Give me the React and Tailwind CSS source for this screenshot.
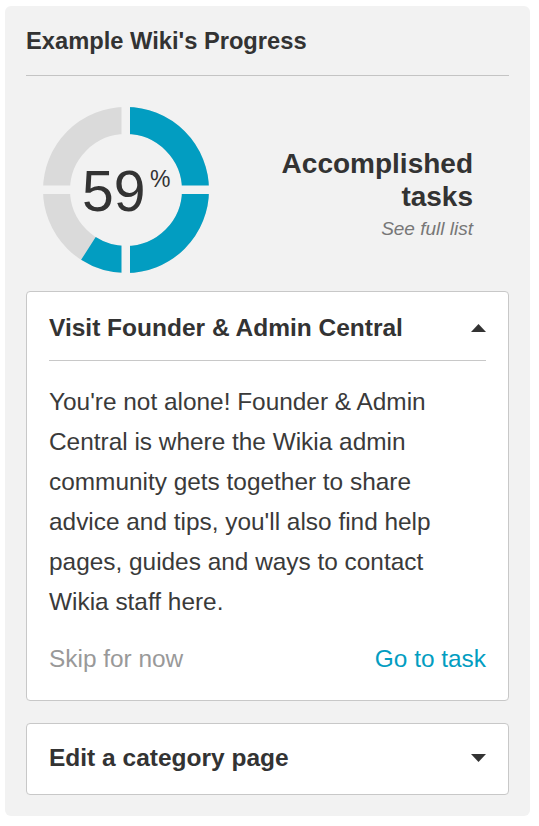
import React from 'react';

const BLUE = '#029dc1';

function Donut({ percent }) {
  const r = 69.5;
  const c = 2 * Math.PI * r;
  return (
    <div className="relative w-[166px] h-[166px] shrink-0">
      <svg width="166" height="166" viewBox="0 0 166 166">
        <circle cx="83" cy="83" r={r} fill="none" stroke="#dadada" strokeWidth="27" />
        <circle
          cx="83"
          cy="83"
          r={r}
          fill="none"
          stroke={BLUE}
          strokeWidth="27"
          strokeDasharray={`${(c * percent) / 100} ${c}`}
          transform="rotate(-90 83 83)"
        />
        <rect x="78.5" y="0" width="8.5" height="166" fill="#f2f2f2" />
        <rect x="0" y="78.5" width="166" height="8.5" fill="#f2f2f2" />
      </svg>
      <span className="absolute left-[39px] top-[56px] text-[57px] leading-none text-[#333]">{percent}</span>
      <span className="absolute left-[107px] top-[61px] text-[23px] leading-none text-[#333]">%</span>
    </div>
  );
}

function Caret({ up }) {
  return (
    <svg width="15" height="8" viewBox="0 0 15 8" className="shrink-0">
      {up ? <polygon points="7.5,0 15,8 0,8" fill="#333" /> : <polygon points="0,0 15,0 7.5,8" fill="#333" />}
    </svg>
  );
}

export default function App() {
  const body = [
    "You're not alone! Founder & Admin",
    'Central is where the Wikia admin',
    'community gets together to share',
    "advice and tips, you'll also find help",
    'pages, guides and ways to contact',
    'Wikia staff here.',
  ];

  return (
    <div className="min-h-[826px] bg-white pt-[6px] pl-[5px] w-[539px]" style={{ fontFamily: '"Liberation Sans", Arial, sans-serif' }}>
      <div className="w-[525px] bg-[#f2f2f2] rounded-[6px] px-[21px] pt-[21px] pb-[21px]">
        <h1 className="text-[23.7px] leading-[28px] font-bold text-[#333]">Example Wiki's Progress</h1>
        <div className="mt-[20px] h-px bg-[#c4c4c4]" />

        <div className="flex items-start justify-between mt-[31px] pl-[17px] pr-[36px]">
          <Donut percent={59} />
          <div className="mt-[40px] text-right">
            <div className="text-[28px] leading-[33px] font-bold text-[#333]">
              Accomplished
              <br />
              tasks
            </div>
            <div className="mt-[5px] text-[19px] leading-[22px] italic text-[#777]">See full list</div>
          </div>
        </div>

        <div className="mt-[18px] bg-white border border-[#c8c8c8] rounded-[4px] px-[22px] pt-[22px] pb-[27px]">
          <div className="flex items-center justify-between pb-[18px] border-b border-[#c8c8c8]">
            <h2 className="text-[24.5px] leading-[28px] font-bold text-[#333]">Visit Founder &amp; Admin Central</h2>
            <Caret up />
          </div>
          <p className="mt-[21px] text-[24.4px] leading-[40px] text-[#3a3a3a]">
            {body.map((line, i) => (
              <React.Fragment key={i}>
                {line}
                {i < body.length - 1 && <br />}
              </React.Fragment>
            ))}
          </p>
          <div className="mt-[23px] flex items-center justify-between text-[24.4px] leading-[28px]">
            <span className="text-[#999]">Skip for now</span>
            <span className="text-[#029dc1]">Go to task</span>
          </div>
        </div>

        <div className="mt-[22px] bg-white border border-[#c8c8c8] rounded-[4px] px-[22px] pt-[20px] pb-[22px] flex items-center justify-between">
          <h2 className="text-[24.5px] leading-[28px] font-bold text-[#333]">Edit a category page</h2>
          <Caret />
        </div>
      </div>
    </div>
  );
}
